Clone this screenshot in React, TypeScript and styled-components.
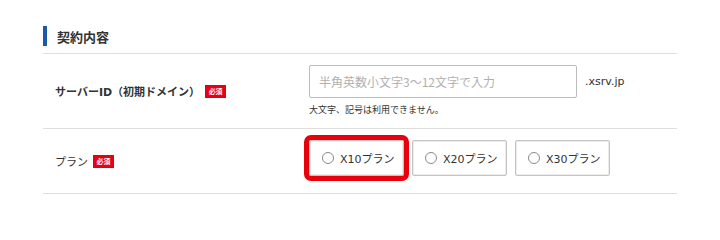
import React from 'react';
import styled, { createGlobalStyle } from 'styled-components';

const GlobalStyle = createGlobalStyle`
  html, body {
    margin: 0;
    padding: 0;
    background: #fff;
  }
  body {
    font-family: "DejaVu Sans", "Noto Sans CJK JP", sans-serif;
    color: #333;
  }
`;

const Section = styled.section`
  width: 634px;
  margin-left: 43px;
  padding-top: 26px;
`;

const Heading = styled.h2`
  display: flex;
  align-items: center;
  height: 20px;
  margin: 0;
  padding-left: 10px;
  border-left: 4px solid #1b5aa6;
  font-family: "Noto Sans CJK JP", sans-serif;
  font-size: 13px;
  font-weight: 700;
  color: #333;
`;

const Divider = styled.div`
  margin-top: 7px;
  border-top: 1px solid #dedede;
`;

const Row = styled.div`
  display: grid;
  grid-template-columns: 266px 1fr;
  align-items: center;
  border-bottom: 1px solid #dedede;
`;

const Label = styled.div<{ $bold?: boolean }>`
  display: flex;
  align-items: center;
  padding-left: 12px;
  font-family: "DejaVu Sans", "Noto Sans CJK JP", sans-serif;
  font-size: 11px;
  font-weight: ${(p) => (p.$bold ? 700 : 400)};
  color: #333;
`;

const Badge = styled.span`
  display: inline-flex;
  align-items: center;
  justify-content: center;
  width: 21px;
  height: 13px;
  margin-left: 5px;
  background: #e60012;
  color: #fff;
  font-family: "Noto Sans CJK JP", sans-serif;
  font-size: 7px;
  font-weight: 700;
`;

const Field = styled.div<{ $pt: number; $pb: number }>`
  padding: ${(p) => p.$pt}px 0 ${(p) => p.$pb}px;
`;

const InputLine = styled.div`
  display: flex;
  align-items: center;
  gap: 8px;
`;

const TextInput = styled.input`
  box-sizing: border-box;
  width: 268px;
  height: 33px;
  padding: 0 9px;
  border: 1px solid #bcbcbc;
  border-radius: 2px;
  font-family: "Noto Sans CJK JP", sans-serif;
  font-size: 12px;
  color: #333;
  outline: none;
  &::placeholder {
    color: #b0b0b0;
  }
`;

const Suffix = styled.span`
  font-family: "DejaVu Sans", sans-serif;
  font-size: 11px;
  color: #333;
`;

const Hint = styled.p`
  margin: 6px 0 0;
  font-family: "Noto Sans CJK JP", sans-serif;
  font-size: 9px;
  line-height: 12px;
  color: #333;
`;

const Plans = styled.div`
  display: flex;
  gap: 8px;
`;

const PlanButton = styled.label<{ $highlight?: boolean }>`
  box-sizing: border-box;
  display: flex;
  align-items: center;
  gap: 6px;
  width: 95px;
  height: 36px;
  padding-left: 12px;
  border: 1px solid #c4c4c4;
  border-radius: 2px;
  box-shadow: inset 0 0 0 1px #ececec;
  background: #fff;
  font-family: "DejaVu Sans", "Noto Sans CJK JP", sans-serif;
  font-size: 11px;
  color: #333;
  cursor: pointer;
  outline: ${(p) => (p.$highlight ? '5px solid #e8000b' : 'none')};
  outline-offset: 0;
`;

const Radio = styled.span`
  box-sizing: border-box;
  width: 12px;
  height: 12px;
  border: 1px solid #8a8a8a;
  border-radius: 50%;
  background: #fff;
`;

const plans = ['X10プラン', 'X20プラン', 'X30プラン'];

const App = () => {
  return (
    <>
      <GlobalStyle />
      <Section>
        <Heading>契約内容</Heading>
        <Divider />
        <Row>
          <Label $bold>
            サーバーID（初期ドメイン）<Badge>必須</Badge>
          </Label>
          <Field $pt={11} $pb={12}>
            <InputLine>
              <TextInput placeholder="半角英数小文字3〜12文字で入力" />
              <Suffix>.xsrv.jp</Suffix>
            </InputLine>
            <Hint>大文字、記号は利用できません。</Hint>
          </Field>
        </Row>
        <Row>
          <Label>
            プラン<Badge>必須</Badge>
          </Label>
          <Field $pt={11} $pb={17}>
            <Plans>
              {plans.map((name, i) => (
                <PlanButton key={name} $highlight={i === 0}>
                  <Radio />
                  {name}
                </PlanButton>
              ))}
            </Plans>
          </Field>
        </Row>
      </Section>
    </>
  );
};

export default App;
